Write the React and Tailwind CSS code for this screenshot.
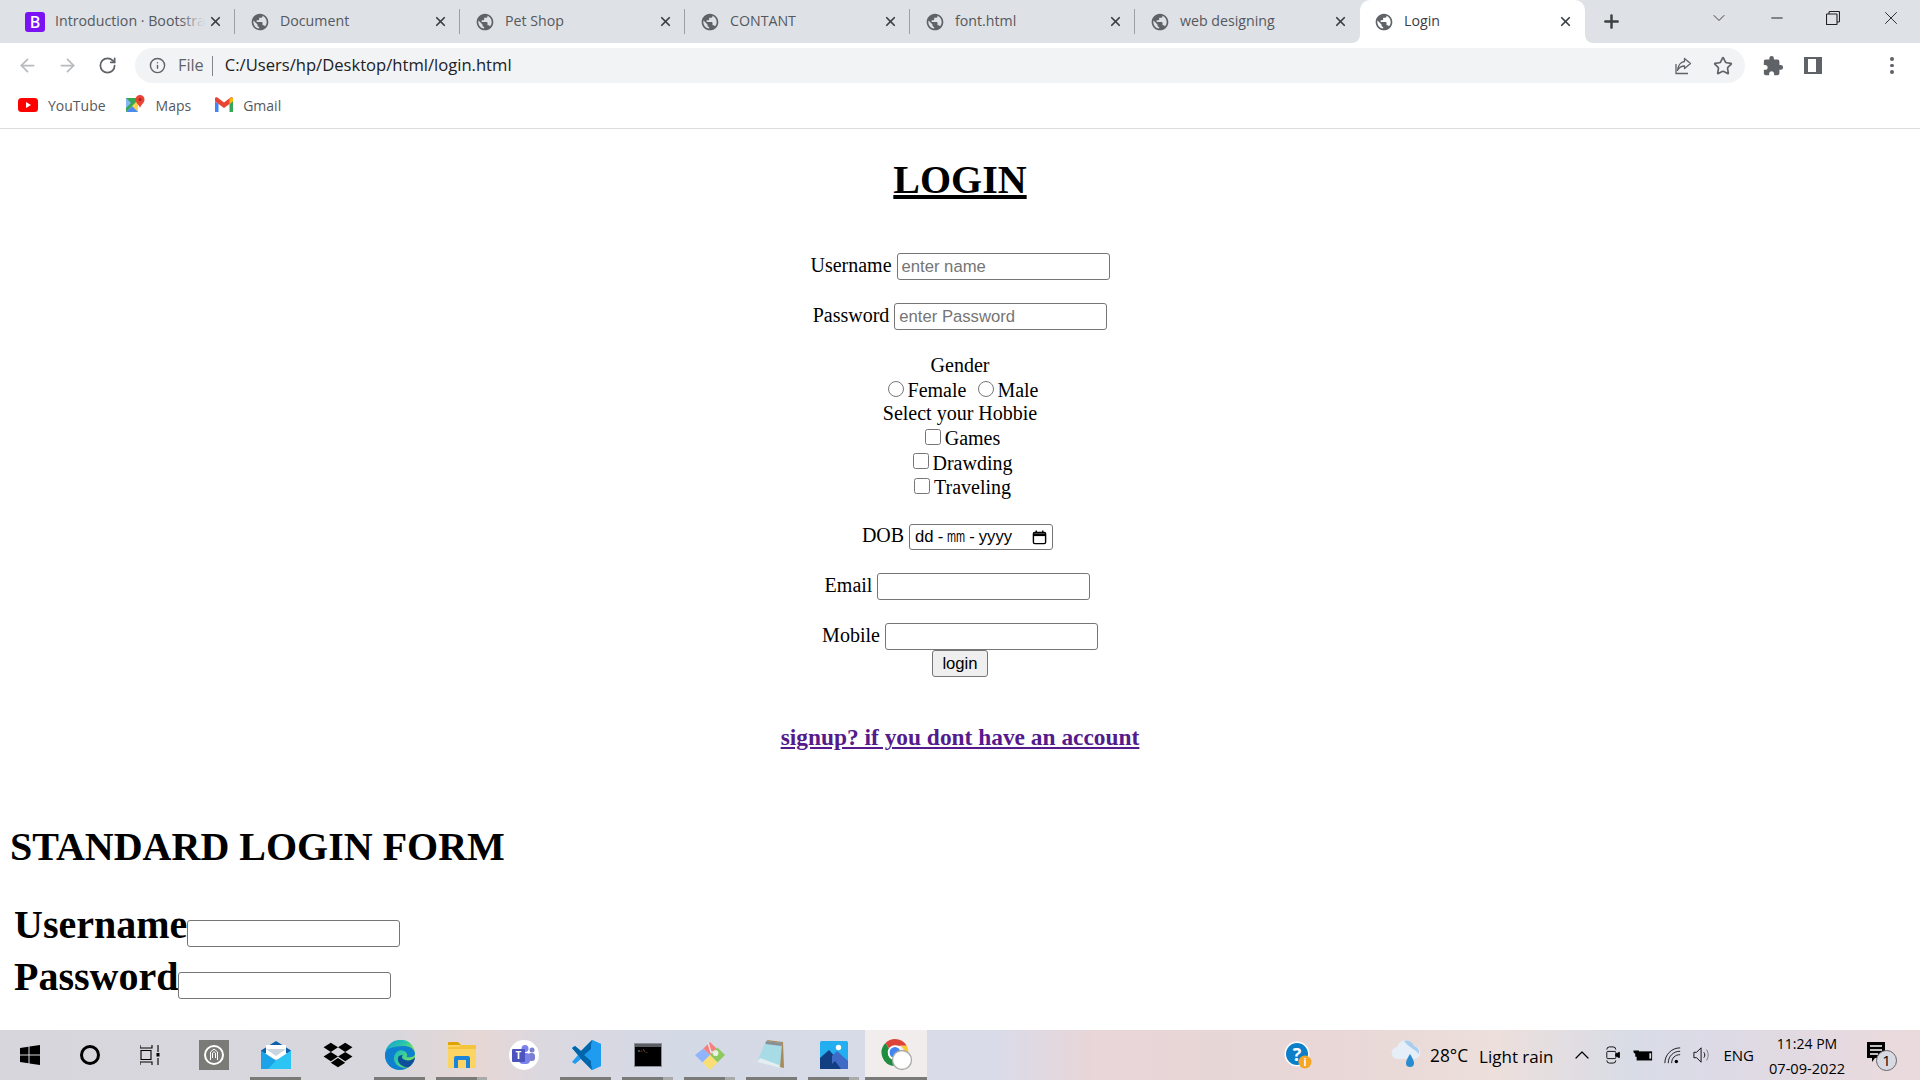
import React from "react";
import { ArrowLeft, ArrowRight, RotateCw, Info, Star, X, Plus, ChevronDown, Minus, ChevronUp } from "lucide-react";
import { MdPublic, MdExtension } from "react-icons/md";
import { FaDropbox } from "react-icons/fa";

const Bootstrap = () => (
  <span className="flex h-5 w-5 shrink-0 items-center justify-center rounded-[3px] bg-[#7a12f4] font-['Open_Sans',sans-serif] text-[16px] font-semibold leading-none text-white">
    B
  </span>
);

const Globe = () => <MdPublic className="h-5 w-5 shrink-0 text-[#5f6368]" />;

const tabs = [
  { title: "Introduction · Bootstra", icon: <Bootstrap />, fade: true },
  { title: "Document", icon: <Globe /> },
  { title: "Pet Shop", icon: <Globe /> },
  { title: "CONTANT", icon: <Globe /> },
  { title: "font.html", icon: <Globe /> },
  { title: "web designing", icon: <Globe />, noSep: true },
  { title: "Login", icon: <Globe />, active: true, noSep: true },
];

const Tab = ({ title, icon, active, noSep, fade }) => (
  <div className={`relative flex h-full w-[225px] shrink-0 items-center pr-[12px] ${active ? "rounded-t-[10px] bg-white pl-[14px] text-[#3c4043]" : "pl-[15px] text-[#55585d]"}`}>
    {active && (
      <>
        <div className="absolute bottom-0 left-[-8px] h-2 w-2 bg-white">
          <div className="h-full w-full rounded-br-[8px] bg-[#dee1e6]" />
        </div>
        <div className="absolute bottom-0 right-[-8px] h-2 w-2 bg-white">
          <div className="h-full w-full rounded-bl-[8px] bg-[#dee1e6]" />
        </div>
      </>
    )}
    {icon}
    <div className="relative ml-[10px] mb-[2px] min-w-0 flex-1 whitespace-nowrap text-[14.2px] leading-5">
      {title}
      {fade && <div className="absolute inset-y-0 right-0 w-6 bg-gradient-to-r from-transparent to-[#dee1e6]" />}
    </div>
    <X className="ml-1 h-[15px] w-[15px] shrink-0 text-[#3c4043]" strokeWidth={2.8} />
    {!noSep && <div className="absolute bottom-[9px] right-0 top-[9px] w-px bg-[#9aa0a6]" />}
  </div>
);

const WinSlot = ({ children, w }) => <div className={`flex h-[36px] items-center justify-center text-[#202124] ${w}`}>{children}</div>;

const TabStrip = () => (
  <div className="flex h-[43px] shrink-0 bg-[#dee1e6] pl-[10px]">
    {tabs.map((t) => (
      <Tab key={t.title} {...t} />
    ))}
    <Plus className="ml-[16px] mt-[11px] h-[21px] w-[21px] text-[#3c4043]" strokeWidth={2.8} />
    <div className="ml-auto flex items-start">
      <WinSlot w="w-[62px]">
        <ChevronDown className="h-[20px] w-[24px]" strokeWidth={1} />
      </WinSlot>
      <WinSlot w="w-[54px]">
        <Minus className="h-[18px] w-[18px]" strokeWidth={1.3} />
      </WinSlot>
      <WinSlot w="w-[58px]">
        <svg viewBox="0 0 14 14" className="h-[14px] w-[14px]" fill="none" stroke="currentColor" strokeWidth="1.1">
          <rect x="0.5" y="3" width="10.5" height="10.5" rx="0.5" />
          <path d="M3 3V1.5a1 1 0 0 1 1-1h8.5a1 1 0 0 1 1 1V10a1 1 0 0 1-1 1H11" />
        </svg>
      </WinSlot>
      <WinSlot w="w-[58px]">
        <X className="h-[22px] w-[22px]" strokeWidth={1} />
      </WinSlot>
    </div>
  </div>
);

const ShareIcon = () => (
  <svg viewBox="0 0 20 20" className="h-5 w-5 text-[#5f6368]" fill="none" stroke="currentColor" strokeWidth="1.3">
    <path d="M3 8v9.5h12" />
    <path d="M11.5 2.5l6 5-6 5V10C8 10 6 11.5 4.5 14.5 5 10 7.5 5.8 11.5 5.5z" strokeLinejoin="round" />
  </svg>
);

const Toolbar = () => (
  <div className="flex h-[45px] shrink-0 items-center bg-white pl-[7px] pr-[8px]">
    <div className="flex w-[40px] justify-center">
      <ArrowLeft className="h-[21px] w-[21px] text-[#b8babd]" strokeWidth={2} />
    </div>
    <div className="flex w-[40px] justify-center">
      <ArrowRight className="h-[21px] w-[21px] text-[#b8babd]" strokeWidth={2} />
    </div>
    <div className="flex w-[40px] justify-center">
      <RotateCw className="h-[19px] w-[19px] text-[#5f6368]" strokeWidth={2.2} />
    </div>
    <div className="ml-[8px] flex h-[35px] flex-1 items-center rounded-full bg-[#f1f3f4] pl-[14px] pr-[12px]">
      <Info className="h-[17px] w-[17px] text-[#5f6368]" strokeWidth={2} />
      <span className="ml-[12px] text-[16.3px] text-[#5f6368]">File</span>
      <div className="ml-[8px] h-[20px] w-px bg-[#80868b]" />
      <span className="ml-[12px] text-[16.6px] text-[#202124]">C:/Users/hp/Desktop/html/login.html</span>
      <div className="ml-auto flex items-center gap-5">
        <ShareIcon />
        <Star className="h-5 w-5 text-[#5f6368]" strokeWidth={2} />
      </div>
    </div>
    <div className="ml-[8px] flex w-[40px] justify-center">
      <MdExtension className="h-[22px] w-[22px] text-[#5f6368]" />
    </div>
    <div className="flex w-[40px] justify-center">
      <div className="flex h-[17px] w-[18px] justify-end bg-[#5f6368] pr-[6px] pt-[2px] pb-[2px]">
        <div className="h-full w-[8px] bg-white" />
      </div>
    </div>
    <div className="w-[39px]" />
    <div className="flex w-[40px] flex-col items-center gap-[3px]">
      <div className="h-[3.5px] w-[3.5px] rounded-full bg-[#5f6368]" />
      <div className="h-[3.5px] w-[3.5px] rounded-full bg-[#5f6368]" />
      <div className="h-[3.5px] w-[3.5px] rounded-full bg-[#5f6368]" />
    </div>
  </div>
);

const YouTubeIcon = () => (
  <svg viewBox="0 0 20 14" className="h-[14px] w-5 shrink-0">
    <rect width="20" height="14" rx="3.5" fill="#f00" />
    <path d="M8 4l5 3-5 3z" fill="#fff" />
  </svg>
);

const MapsIcon = () => (
  <svg viewBox="0 0 20 20" className="h-5 w-5 shrink-0">
    <path d="M1 3h12v14H1z" fill="#35a853" />
    <path d="M1 17L13 5v12z" fill="#fbd24c" />
    <path d="M1 17l6-6 6 6z" fill="#4a8af4" />
    <path d="M1 3l5 5-5 5z" fill="#8ab4f8" />
    <path d="M15 0a4.5 4.5 0 0 1 4.5 4.5C19.5 8 15.5 10 15 13c-.5-3-4.5-5-4.5-8.500A4.500 4.500 0 0 1 15 0z" fill="#ea4335" />
    <circle cx="15" cy="4.500" r="1.500" fill="#a52714" />
  </svg>
);

const GmailIcon = () => (
  <svg viewBox="0 0 20 16" className="h-4 w-5 shrink-0">
    <path d="M1 4v11h3.500V7z" fill="#4285f4" />
    <path d="M15.500 7v8H19V4z" fill="#34a853" />
    <path d="M1 1.500c0-1.200 1.500-1.800 2.500-1L10 5.500 16.500.5c1-.8 2.500-.2 2.500 1V4l-3.500 3L10 11 4.500 7 1 4z" fill="#ea4335" />
    <path d="M15.500 7V1.800l1-.8c1-.8 2.500-.2 2.500 1V4z" fill="#fbbc04" />
  </svg>
);

const Bookmarks = () => (
  <div className="flex h-[41px] shrink-0 items-center border-b border-[#dadce0] bg-white pb-[6px] pl-[18px] text-[14px] text-[#55585d]">
    <YouTubeIcon />
    <span className="ml-[10px]">YouTube</span>
    <div className="ml-[19px]">
      <MapsIcon />
    </div>
    <span className="ml-[11px]">Maps</span>
    <div className="ml-[23px]">
      <GmailIcon />
    </div>
    <span className="ml-[9px]">Gmail</span>
  </div>
);

const textInput = "h-[27px] w-[213px] rounded-[3px] border border-[#767676] bg-white px-[4px] font-['Liberation_Sans',sans-serif] text-[16.67px] placeholder:text-[#757575] outline-none";

const Page = () => (
  <main className="min-h-0 flex-1 overflow-hidden bg-white px-[10px] font-['Liberation_Serif',serif] text-[20px] leading-[23px] text-black">
    <h1 className="mt-[28px] text-center text-[40px] font-bold leading-[46px] underline">LOGIN</h1>
    <div className="mt-[50px] text-center">
      <label>Username</label> <input className={textInput} placeholder="enter name" />
    </div>
    <div className="mt-[23px] text-center">
      <label>Password</label> <input className={textInput} placeholder="enter Password" />
    </div>
    <div className="mt-[24px] text-center">
      Gender
      <br />
      <input type="radio" name="g" className="ml-[6.25px] mr-[3.75px] mt-[3.75px] h-4 w-4" />Female{" "}
      <input type="radio" name="g" className="ml-[6.25px] mr-[3.75px] mt-[3.75px] h-4 w-4" />Male
      <br />
      Select your Hobbie
      <br />
      <input type="checkbox" className="ml-[5px] mr-[4px] mt-[3.75px] h-4 w-4" />Games
      <br />
      <input type="checkbox" className="ml-[5px] mr-[4px] mt-[3.75px] h-4 w-4" />Drawding
      <br />
      <input type="checkbox" className="ml-[5px] mr-[4px] mt-[3.75px] h-4 w-4" />Traveling
    </div>
    <div className="mt-[25px] text-center">
      <label>DOB</label>{" "}
      <span className="inline-flex h-[26px] w-[144px] items-center rounded-[3px] border border-[#767676] bg-white pl-[5px] pr-[5px] align-baseline font-['Liberation_Sans',sans-serif] text-[16.67px] leading-none">
        <span>dd</span>
        <span className="ml-[4px]">-</span>
        <span className="ml-[4px] inline-block w-[18px] origin-left scale-x-[0.65]">mm</span>
        <span className="ml-[4px]">-</span>
        <span className="ml-[4px]">yyyy</span>
        <svg viewBox="0 0 16 16" className="ml-auto h-[15px] w-[15px]" fill="none" stroke="#000" strokeWidth="1.500">
          <rect x="1.500" y="2.500" width="13" height="12" rx="1.500" />
          <path d="M1.500 5h13" strokeWidth="3" />
          <path d="M4.500 0.500v2M11.500 0.500v2" />
        </svg>
      </span>
      {"\u00a0"}
    </div>
    <div className="mt-[23px] text-center">
      <label>Email</label> <input className={textInput} />
      {"\u00a0"}
    </div>
    <div className="mt-[23px] text-center">
      <label>Mobile</label> <input className={textInput} />
    </div>
    <div className="text-center">
      <button className="h-[27px] w-[56px] rounded-[3px] border border-[#767676] bg-[#efefef] font-['Liberation_Sans',sans-serif] text-[16.67px] leading-none">login</button>
    </div>
    <div className="mt-[47px] text-center text-[23.4px] font-bold leading-[27px]">
      <a className="text-[#551a8b] underline">signup? if you dont have an account</a>
    </div>
    <h1 className="mt-[73px] text-[40px] font-bold leading-[46px]">STANDARD LOGIN FORM</h1>
    <div className="mt-[32px] pl-[4px] text-[40px] font-bold leading-[46px]">
      <div>
        Username<input className={textInput} />
      </div>
      <div className="mt-[6px]">
        Password<input className={textInput} />
      </div>
    </div>
  </main>
);

const WindowsLogo = () => (
  <svg viewBox="0 0 20 20" className="h-[20px] w-[20px]" fill="#000">
    <path d="M0 3l8.500-1.200V9.500H0zM9.500 1.600L20 0v9.500H9.500zM0 10.500h8.500v7.700L0 17zM9.500 10.500H20V20L9.500 18.400z" />
  </svg>
);

const TaskView = () => (
  <svg viewBox="0 0 20 20" className="h-[20px] w-[20px]" fill="none" stroke="#000" strokeWidth="1.100">
    <path d="M0 0v3h12V0M1 5.500h10v9H1zM0 20v-3h12v3" />
    <path d="M18 0v7M18 13v7" />
    <rect x="16.500" y="8" width="3" height="3.500" fill="#000" stroke="none" />
  </svg>
);

const AppSquare = () => (
  <div className="flex h-[30px] w-[30px] items-center justify-center bg-[#7a7b76]">
    <svg viewBox="0 0 20 20" className="h-[20px] w-[20px]" fill="none">
      <circle cx="10" cy="10" r="9" stroke="#fff" strokeWidth="2" />
      <path d="M6.500 15V7L10 4l3.500 3v8M8.500 13V8l1.500-1.300L11.500 8v5" stroke="#fff" strokeWidth="1" />
    </svg>
  </div>
);

const MailIcon = () => (
  <svg viewBox="0 0 30 28" className="h-[28px] w-[30px]">
    <path d="M0 9.500L15 0l15 9.500V12H0z" fill="#0d62ab" />
    <path d="M5 4h20v14H5z" fill="#fff" />
    <path d="M5 8h20l-10 7z" fill="#c8d4de" />
    <path d="M0 9.500l15 10v8.500H0z" fill="#1aa3e8" />
    <path d="M30 9.500l-15 10 -8 8.500h23z" fill="#2cc3f5" />
  </svg>
);

const EdgeIcon = () => (
  <svg viewBox="0 0 30 30" className="h-[30px] w-[30px]">
    <defs>
      <linearGradient id="edgeA" x1="0" y1="0" x2="1" y2="0.600">
        <stop offset="0" stopColor="#0fa0d8" />
        <stop offset="0.600" stopColor="#2fc9a4" />
        <stop offset="1" stopColor="#7ee05b" />
      </linearGradient>
    </defs>
    <circle cx="15" cy="15" r="15" fill="url(#edgeA)" />
    <path d="M0 15C0 24 7 30 15 30c3 0 6-1 8-2.500C15 29 8 24 9 17 10 12 15 9 19 11c3 1.500 4 4 2.500 6 5 1 8.500-1 8.500-3C30 13 29 9 26 6 20 3 10 3 5 7 2 9 0 12 0 15z" fill="#0f7fd0" />
    <path d="M13 18c-1 5 4 9 10 9.500C28 25 30 20 30 17c-2 3-6 4-10 3-3-1-4-3-2-5-3 0-5 1-5 3z" fill="#0e4f9c" />
    <path d="M3 9C6 3 12 0 17 0c6 0 11 4 13 12-2-4-6-6-11-6-6 0-12 1-16 3z" fill="url(#edgeA)" />
  </svg>
);

const ExplorerIcon = () => (
  <svg viewBox="0 0 28 28" className="h-[28px] w-[28px]">
    <path d="M0 2a1 1 0 0 1 1-1h9l3 3h-13z" fill="#e0a400" />
    <path d="M0 4h28v22a1 1 0 0 1-1 1H1a1 1 0 0 1-1-1z" fill="#fcd463" />
    <path d="M0 8h28v-4H13l-2 2H0z" fill="#f6c33c" />
    <path d="M6 27V17a2 2 0 0 1 2-2h12a2 2 0 0 1 2 2v10h-4v-8h-8v8z" fill="#1c84d8" />
  </svg>
);

const TeamsIcon = () => (
  <div className="flex h-[30px] w-[30px] items-center justify-center rounded-full bg-white">
    <svg viewBox="0 0 24 20" className="h-[20px] w-[24px]">
      <circle cx="20" cy="5" r="2.500" fill="#7a7fd0" />
      <rect x="16" y="8" width="7" height="8" rx="3" fill="#7a7fd0" />
      <circle cx="13" cy="3.500" r="3.500" fill="#7b83eb" />
      <rect x="7" y="8" width="11" height="11" rx="4" fill="#7b83eb" />
      <rect x="0" y="4" width="13" height="13" rx="1" fill="#4b53bc" />
      <text x="6.500" y="14" textAnchor="middle" fontSize="10" fontWeight="700" fill="#fff" fontFamily="'Open Sans',sans-serif">T</text>
    </svg>
  </div>
);

const VSCodeIcon = () => (
  <svg viewBox="0 0 30 30" className="h-[30px] w-[30px]">
    <path d="M21 0l9 4v22l-9 4-11-11-6 5-3-2 6-7-6-7 3-2 6 5z" fill="#1f9cf0" />
    <path d="M21 0L10 11l-6-5-3 2 6 7 3 4L21 30l-1-6v-19z" fill="#0065a9" />
    <path d="M21 0l9 4v22l-9 4zM21 8l-8 7 8 7z" fill="#1f9cf0" />
  </svg>
);

const TerminalIcon = () => (
  <div className="h-[24px] w-[28px] border border-[#8a8e96] bg-black">
    <div className="h-[3px] w-full bg-[#5a5d63]" />
    <div className="ml-[3px] mt-[2px] font-['Liberation_Mono',monospace] text-[4px] leading-none text-[#ccc]">C:\_</div>
  </div>
);

const GitIcon = () => (
  <svg viewBox="0 0 32 32" className="h-[30px] w-[30px]">
    <path d="M16 16L9 9 0 16l8 8z" fill="#8fb4fa" />
    <path d="M16 16l-7-7 7-7 7 7z" fill="#f8807c" />
    <path d="M16 16l8-8 8 8-8 8z" fill="#8dc95c" />
    <path d="M16 16l-8 8 8 8 8-8z" fill="#f8de75" />
    <circle cx="22" cy="14" r="3" fill="#fff" opacity="0.8" />
    <path d="M14 3l3 10 6-1" stroke="#e6e8ee" strokeWidth="1.500" fill="none" />
  </svg>
);

const NotepadIcon = () => (
  <svg viewBox="0 0 30 30" className="h-[30px] w-[30px]">
    <path d="M10 0l16 2 1 26-4-1z" fill="#a98a57" />
    <path d="M9 1l16 2-2 25L0 22z" fill="#a7dbe6" />
    <path d="M0 22l23 6-1-3L3 18z" fill="#e4eef1" />
    <path d="M9 1l16 2-.5 3-16-2z" fill="#8a8f94" />
  </svg>
);

const PhotosIcon = () => (
  <svg viewBox="0 0 28 28" className="h-[28px] w-[28px]">
    <rect width="28" height="28" rx="1.500" fill="#23aef0" />
    <circle cx="18.500" cy="6.500" r="2.700" fill="#fff" />
    <path d="M0 28V17l9-8 9 10-4 9z" fill="#123f82" />
    <path d="M12 15l5-5 11 10v8H12z" fill="#3f6bc6" />
    <path d="M7 28l8-8 6 8z" fill="#123f82" />
  </svg>
);

const ChromeIcon = () => (
  <svg viewBox="0 0 34 34" className="ml-[3px] h-[34px] w-[34px]">
    <path d="M14 1a13.500 13.500 0 0 1 11.700 6.800H14a6 6 0 0 0-5.500 3.500L4.500 5A13.500 13.500 0 0 1 14 1z" fill="#db4437" />
    <path d="M25.700 7.800A13.500 13.500 0 0 1 14 28l5-9a6 6 0 0 0 0-11.200z" fill="#fcc934" />
    <path d="M4.500 5A13.500 13.500 0 0 0 14 28l5-8.500a6 6 0 0 1-10.500-8z" fill="#1e8e3e" />
    <circle cx="14" cy="14.500" r="5.500" fill="#4285f4" />
    <circle cx="14" cy="14.500" r="6.500" fill="none" stroke="#fff" strokeWidth="1.500" />
    <circle cx="21" cy="22" r="9.500" fill="#fff" stroke="#a9a9a9" strokeWidth="1.300" />
  </svg>
);

const apps = [
  { icon: <AppSquare /> },
  { icon: <MailIcon />, run: "full" },
  { icon: <FaDropbox className="h-[28px] w-[30px] text-black" /> },
  { icon: <EdgeIcon />, run: "full" },
  { icon: <ExplorerIcon />, run: "multi" },
  { icon: <TeamsIcon /> },
  { icon: <VSCodeIcon />, run: "full" },
  { icon: <TerminalIcon />, run: "multi" },
  { icon: <GitIcon />, run: "multi" },
  { icon: <NotepadIcon />, run: "full" },
  { icon: <PhotosIcon />, run: "multi" },
  { icon: <ChromeIcon />, run: "active" },
];

const AppSlot = ({ icon, run }) => (
  <div className={`relative flex h-full w-[62px] shrink-0 items-center justify-center pb-[1px] ${run === "active" ? "bg-[#f2eded]" : ""}`}>
    {icon}
    {run === "full" && <div className="absolute bottom-0 left-[5px] h-[3px] w-[51px] bg-[#7a7a78]" />}
    {run === "multi" && (
      <div className="absolute bottom-0 left-[5px] flex h-[3px] w-[51px]">
        <div className="w-[41px] bg-[#7a7a78]" />
        <div className="w-[10px] bg-[#a9abaa]" />
      </div>
    )}
    {run === "active" && <div className="absolute bottom-0 left-0 h-[3px] w-full bg-[#7a7a78]" />}
  </div>
);

const HelpIcon = () => (
  <svg viewBox="0 0 28 28" className="h-[28px] w-[28px]">
    <circle cx="13" cy="13" r="12.500" fill="#fff" />
    <circle cx="13" cy="13" r="11" fill="#0d7fc9" />
    <text x="13" y="19.500" textAnchor="middle" fontSize="18" fontWeight="700" fill="#fff" fontFamily="'Open Sans',sans-serif">?</text>
    <circle cx="21" cy="21" r="6.500" fill="#f5a623" />
    <text x="21" y="25" textAnchor="middle" fontSize="10" fontWeight="700" fill="#fff" fontFamily="'Open Sans',sans-serif">i</text>
  </svg>
);

const WeatherIcon = () => (
  <svg viewBox="0 0 30 32" className="h-[32px] w-[30px]">
    <path d="M7 20a6 6 0 0 1-1-12 9 9 0 0 1 17-1 6.500 6.500 0 0 1 0 13z" fill="#e6eef7" />
    <path d="M13 2a8 8 0 0 1 10 5 6.500 6.500 0 0 1 5 8c-4-5-10-6-15-13z" fill="#a9cdee" />
    <path d="M19 15s-4 6-4 9a4 4 0 0 0 8 0c0-3-4-9-4-9z" fill="#2a8ccf" />
  </svg>
);

const MeetIcon = () => (
  <svg viewBox="0 0 20 20" className="h-[18px] w-[18px]" fill="none" stroke="#000" strokeWidth="1">
    <path d="M2 4a3 3 0 0 1 3-3h4a3 3 0 0 1 3 3M2 16a3 3 0 0 0 3 3h4a3 3 0 0 0 3-3" />
    <rect x="2" y="6" width="10" height="8" rx="1" />
    <path d="M12 9l4-2v6l-4-2z" fill="#000" />
  </svg>
);

const BatteryIcon = () => (
  <svg viewBox="0 0 22 16" className="h-[16px] w-[20px]">
    <rect x="4" y="4" width="17" height="10" fill="#000" />
    <path d="M2 0v3M5 0v3M0.500 3h6v2l-2 2v3H2.500V7l-2-2z" fill="#000" />
    <rect x="18" y="6" width="2" height="6" fill="#d9dce3" />
  </svg>
);

const WifiIcon = () => (
  <svg viewBox="0 0 20 20" className="h-[17px] w-[17px]" fill="none" stroke="#000" strokeWidth="1">
    <path d="M1 19C1 9 9 1 19 1M5 19c0-8 6-14 14-14M9 19c0-6 4-10 10-10" />
    <circle cx="14.500" cy="17" r="2" fill="#000" stroke="none" />
  </svg>
);

const VolumeIcon = () => (
  <svg viewBox="0 0 20 20" className="h-[18px] w-[18px]" fill="none" stroke="#000" strokeWidth="1">
    <path d="M1 7h3l5-5v16l-5-5H1z" />
    <path d="M12 7c1.500 2 1.500 4 0 6" />
    <path d="M15 4c2.500 4 2.500 8 0 12" stroke="#777" />
  </svg>
);

const NotifyIcon = () => (
  <div className="relative h-[28px] w-[30px]">
    <svg viewBox="0 0 20 22" className="absolute left-0 top-0 h-[24px] w-[20px]">
      <path d="M0 0h18v16H8l-3 4v-4H0z" fill="#000" />
      <path d="M3 4h12M3 8h12M3 12h8" stroke="#fff" strokeWidth="1.300" />
    </svg>
    <div className="absolute bottom-[-2px] right-0 flex h-[21px] w-[21px] items-center justify-center rounded-full border border-[#666] bg-[#d8dae3] text-[15px] leading-none text-black">
      1
    </div>
  </div>
);

const Taskbar = () => (
  <footer className="flex h-[50px] shrink-0 items-center bg-[linear-gradient(90deg,#d6d6dc_0%,#d7d7dd_20%,#e6d7d5_25%,#dcd8df_28%,#d4d9e6_35%,#dadbe8_52%,#e8d6d8_57%,#e8d7d6_70%,#ecdfdc_78%,#d8dce6_85%,#dcdae6_89%,#ebdadc_100%)] font-['Open_Sans',sans-serif] text-black">
    <div className="flex h-[30px] w-[60px] items-center justify-center">
      <WindowsLogo />
    </div>
    <div className="flex h-[30px] w-[60px] items-center justify-center">
      <div className="h-[20px] w-[20px] rounded-full border-[3px] border-black" />
    </div>
    <div className="flex h-[30px] w-[60px] items-center justify-center">
      <TaskView />
    </div>
    <div className="ml-[3px] flex h-full">
      {apps.map((a, i) => (
        <AppSlot key={i} {...a} />
      ))}
    </div>
    <div className="ml-[357px]">
      <HelpIcon />
    </div>
    <div className="ml-[79px]">
      <WeatherIcon />
    </div>
    <span className="ml-[9px] mt-[2px] text-[17.3px] leading-none">28°C</span>
    <span className="ml-[11px] mt-[2px] text-[17px] leading-none">Light rain</span>
    <ChevronUp className="ml-[17px] h-[24px] w-[24px]" strokeWidth={1.2} />
    <div className="ml-[11px]">
      <MeetIcon />
    </div>
    <div className="ml-[10px]">
      <BatteryIcon />
    </div>
    <div className="ml-[11px]">
      <WifiIcon />
    </div>
    <div className="ml-[12px]">
      <VolumeIcon />
    </div>
    <span className="ml-[12px] text-[15px] leading-none">ENG</span>
    <div className="ml-[15px] mt-[2px] flex w-[76px] flex-col items-center whitespace-nowrap text-[14px] leading-[24px]">
      <span>11:24 PM</span>
      <span className="text-[14.6px]">07-09-2022</span>
    </div>
    <div className="ml-[22px]">
      <NotifyIcon />
    </div>
  </footer>
);

export default function App() {
  return (
    <div className="flex h-screen w-full flex-col overflow-hidden font-['Open_Sans',sans-serif]">
      <TabStrip />
      <Toolbar />
      <Bookmarks />
      <Page />
      <Taskbar />
    </div>
  );
}
